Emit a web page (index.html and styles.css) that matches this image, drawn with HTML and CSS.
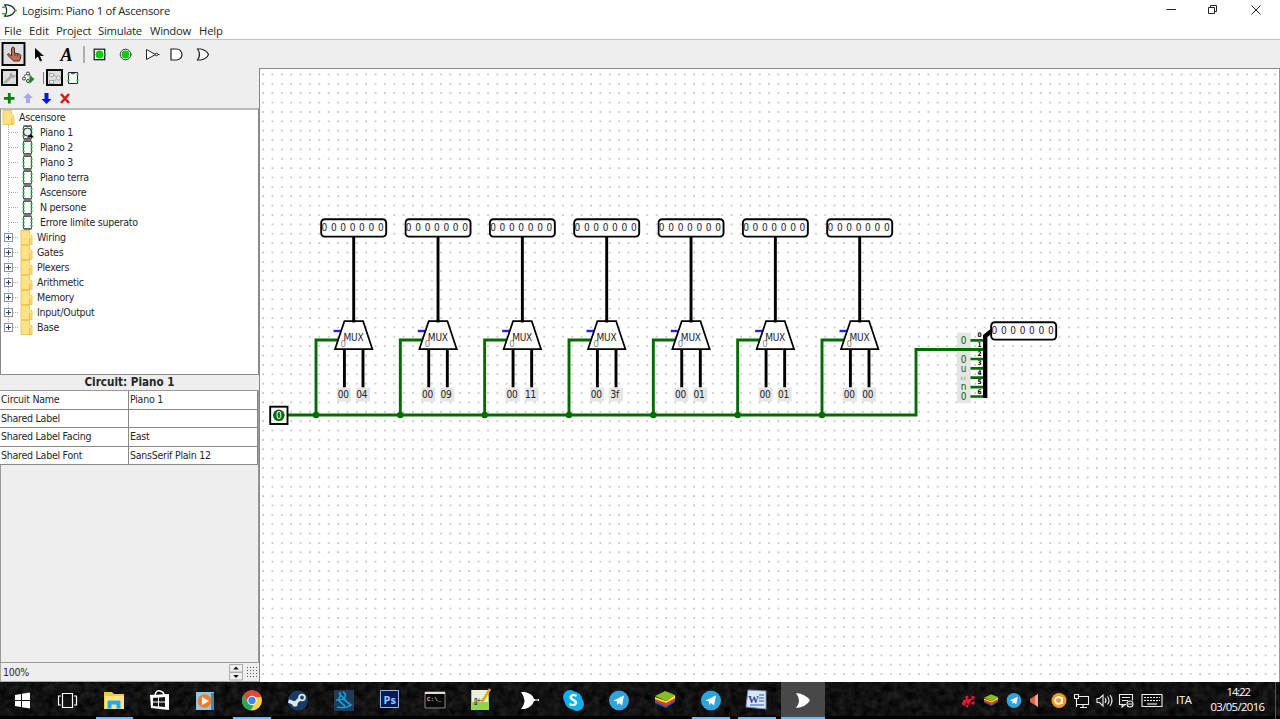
FILE: index.html
```html
<!DOCTYPE html>
<html lang="en">
<head>
<meta charset="utf-8">
<title>Logisim: Piano 1 of Ascensore</title>
<link rel="stylesheet" href="styles.css">
</head>
<body>
<svg class="defs" aria-hidden="true">
  <defs>
    <symbol id="folder" viewBox="0 0 13 15"><path d="M1 .5h8.500v4l2.500 1.500v8.500H1z" fill="#ffe287" stroke="#edc75c"/><path d="M9.800 8v6" stroke="#e4b84b"/></symbol>
    <symbol id="chip" viewBox="0 0 13 15"><path d="M2.500 1.500h8v12h-8z" fill="#fff" stroke="#444"/><path d="M2.500 .8h8M2.500 14.200h8" stroke="#777" stroke-width="1.600"/><path d="M2.500 3v10M10.500 3v10" stroke="#20b838" stroke-width="2" stroke-dasharray="2 1.500"/></symbol>
    <symbol id="plane" viewBox="0 0 20 20"><circle cx="10" cy="10" r="10" fill="#2ea3dc"/><path d="M4.500 10L15 5l-2 10-3-2.500-2 2V11z" fill="#fff"/></symbol>
    <symbol id="stack" viewBox="0 0 20 18"><path d="M0 9l11 5 9-6v3l-9 6-11-5z" fill="#2a55b8"/><path d="M0 7l11 5 9-6v3l-9 6-11-5z" fill="#e83c25"/><path d="M0 6l11 4 9-6v3l-9 5-11-4z" fill="#ffe13a"/><path d="M0 5l10-5 10 4-9 6z" fill="#83bf22"/></symbol>
    <symbol id="display" viewBox="0 0 68 20"><rect x="1.200" y="1.200" width="65" height="17.400" rx="3.500" fill="#fff" stroke="#000" stroke-width="1.900"/><text class="digits" x="1.500 10.900 20.300 29.700 39.100 48.500 57.900" y="13.300">0000000</text></symbol>
    <symbol id="mux" viewBox="0 0 60 180" overflow="visible">
      <path d="M37.700 18v86M28.400 131v38M47 131v38" stroke="#000" stroke-width="2.900"/>
      <path d="M17.500 112.500h8" stroke="#2222e8" stroke-width="2.400"/>
      <path d="M0 196.500v-75h22" fill="none" stroke="#006c00" stroke-width="2.900"/>
      <path d="M28.400 102.700h18.700l9.300 28H19z" fill="#fff" stroke="#000" stroke-width="1.700"/>
      <path d="M37.700 101v3" stroke="#000" stroke-width="2.900"/>
      <text x="24.500" y="128.500" class="select">0</text><text x="27.500" y="122.300" class="label" textLength="20">MUX</text>
      <circle cx="0" cy="196.500" r="3.200" fill="#006c00"/>
      <path d="M21 169h14v14H21zM40 169h14v14H40z" fill="#e5e5e5"/>
      <use href="#display" x="4" y="-.5" width="68" height="20"/>
    </symbol>
    <pattern id="grid" x="5.350" y="4.100" width="9.370" height="9.370" patternUnits="userSpaceOnUse"><rect x="4.200" y="4.200" width="1.100" height="1.100" fill="#666"/></pattern>
    <filter id="grain" x="0" y="0" width="100%" height="100%" color-interpolation-filters="sRGB"><feTurbulence type="fractalNoise" baseFrequency=".13" numOctaves="3" seed="4"/><feColorMatrix values=".2 0 0 0 -.03  .2 0 0 0 -.03  .18 0 0 0 -.02  0 0 0 0 .9"/></filter>
  </defs>
</svg>
<header class="titlebar">
  <svg class="app-icon" viewBox="0 0 16 16"><path d="M3 2h3q6 1 8 6q-2 5-8 6H3q4-6 0-12z" fill="#fff" stroke="#222" stroke-width="1.400"/><path d="M0 4.500h4M0 11.500h4M13 8h3" stroke="#24c224" stroke-width="1.500"/></svg>
  <span class="title">Logisim: Piano 1 of Ascensore</span>
  <svg class="controls" width="100" height="20" viewBox="0 0 100 20" fill="none" stroke="#222"><path d="M.5 9.500H10"/><path d="M42.500 7.500h6v6h-6zM44.500 7.500v-2h6v6h-2"/><path d="M85.500 5.500l9 9m0-9l-9 9"/></svg>
</header>
<nav class="menubar"><span class="m1">File</span><span class="m2">Edit</span><span class="m3">Project</span><span class="m4">Simulate</span><span class="m5">Window</span><span class="m6">Help</span></nav>
<div class="toolbar">
  <svg width="220" height="28" viewBox="0 0 220 28">
    <rect x="2.500" y="3" width="22" height="22" fill="#ddd" stroke="#000" stroke-width="1.900"/>
    <path d="M11.500 16V8q1.500-2 3 0v5l5 1q2 1 1 4l-1 3h-6l-5-5q-2-2 0-2.500z" fill="#bb705c" stroke="#50271c"/><path d="M15 13v3m2.500-2.500v3" stroke="#50271c" stroke-width=".7"/>
    <path d="M35 8v11l3-2.500 2 5 2-1-2-4.500h4z" fill="#000"/>
    <text x="60.500" y="21" class="text-tool">A</text>
    <path d="M84 6v17" stroke="#999" stroke-width="1.500"/>
    <rect x="94.200" y="9.200" width="10.500" height="10.500" fill="#fff" stroke="#222" stroke-width="1.300"/><circle cx="99.500" cy="14.500" r="3.900" fill="#00cf00"/><path d="M104 14.500h2" stroke="#0b0" stroke-width="2"/>
    <circle cx="125.500" cy="14.500" r="5.300" fill="#fff" stroke="#333"/><circle cx="125.500" cy="14.500" r="3.900" fill="#00cf00"/><path d="M130 14.500h2" stroke="#0b0" stroke-width="2"/>
    <path d="M146.500 9.500v10l9-5zM155.500 14.500h4" fill="#fff" stroke="#222"/><circle cx="156.500" cy="14.500" r="1.300" fill="#fff" stroke="#222"/>
    <path d="M171 9v11h5.500a5.500 5.500 0 0 0 0-11z" fill="#fff" stroke="#222" stroke-width="1.200"/>
    <path d="M197.500 9h3q6 1 8 5.500q-2 4.500-8 5.500h-3q4-5.500 0-11z" fill="#fff" stroke="#222" stroke-width="1.200"/>
  </svg>
</div>
<main class="workspace">
  <aside class="sidebar">
    <div class="tools">
      <svg width="100" height="40" viewBox="0 0 100 40">
        <rect x="2" y="2" width="15" height="15" fill="#ddd" stroke="#000" stroke-width="1.900"/><path d="M4.500 15l6.500-6.500" stroke="#aaa" stroke-width="2.600"/><path d="M11.500 4.500q-3 1.500-1.500 4t5.500.5V6.500l-2 .8-1.500-1z" fill="#aaa"/>
        <path d="M23.500 11l2-5h4l3 6" fill="none" stroke="#333" stroke-dasharray="2 1"/><g fill="#fff" stroke="#333"><circle cx="28" cy="5.500" r="1.500"/><circle cx="24" cy="10.500" r="1.500"/><circle cx="28" cy="13" r="1.500"/></g><path d="M29.500 7l5 4-5 5z" fill="#168b22"/>
        <path d="M43.500 4v12" stroke="#777"/><rect x="47" y="2" width="15" height="15" fill="#ddd" stroke="#000" stroke-width="1.900"/><g fill="#eee" stroke="#aaa"><path d="M49.500 5.500h4v3h-4zM49.500 12.500h4v3h-4z"/><circle cx="58.500" cy="10" r="2"/></g><path d="M54 7l2.500 2M54 13l2.500-2" stroke="#aaa"/>
        <path d="M68.500 4.500h9v11h-9z" fill="#fff" stroke="#222"/><path d="M68.500 5.500v10M77.500 5.500v10" stroke="#20b838" stroke-width="2" stroke-dasharray="2 4"/><path d="M71 5q2 2 4 0" fill="none" stroke="#333"/>
        <path d="M9.300 25v10.500M4 30.300h10.500" stroke="#008000" stroke-width="2.800"/>
        <path d="M28 25l-5 5h3v5h4v-5h3z" fill="#a7a7ee"/><path d="M46.500 36l-5-5h3v-6h4v6h3z" fill="#0018e0"/><path d="M61 26l8 9m0-9l-8 9" stroke="#dc1818" stroke-width="2.600"/>
      </svg>
    </div>
    <section class="tree">
      <div class="row root"><svg class="icon"><use href="#folder"/></svg><span>Ascensore</span></div>
      <div class="branch">
        <div class="row circuit"><svg class="icon"><use href="#chip"/><circle cx="6.500" cy="7" r="4" fill="#e8edff" stroke="#222"/><path d="M5.500 12.500h7.500l-3-3z" fill="#000"/></svg><span>Piano 1</span></div>
        <div class="row circuit"><svg class="icon"><use href="#chip"/></svg><span>Piano 2</span></div>
        <div class="row circuit"><svg class="icon"><use href="#chip"/></svg><span>Piano 3</span></div>
        <div class="row circuit"><svg class="icon"><use href="#chip"/></svg><span>Piano terra</span></div>
        <div class="row circuit"><svg class="icon"><use href="#chip"/></svg><span>Ascensore</span></div>
        <div class="row circuit"><svg class="icon"><use href="#chip"/></svg><span>N persone</span></div>
        <div class="row circuit"><svg class="icon"><use href="#chip"/></svg><span>Errore limite superato</span></div>
        <div class="row library"><i class="expander"></i><svg class="icon"><use href="#folder"/></svg><span>Wiring</span></div>
        <div class="row library"><i class="expander"></i><svg class="icon"><use href="#folder"/></svg><span>Gates</span></div>
        <div class="row library"><i class="expander"></i><svg class="icon"><use href="#folder"/></svg><span>Plexers</span></div>
        <div class="row library"><i class="expander"></i><svg class="icon"><use href="#folder"/></svg><span>Arithmetic</span></div>
        <div class="row library"><i class="expander"></i><svg class="icon"><use href="#folder"/></svg><span>Memory</span></div>
        <div class="row library"><i class="expander"></i><svg class="icon"><use href="#folder"/></svg><span>Input/Output</span></div>
        <div class="row library"><i class="expander"></i><svg class="icon"><use href="#folder"/></svg><span>Base</span></div>
      </div>
    </section>
    <h2 class="props-title">Circuit: Piano 1</h2>
    <div class="props">
      <span>Circuit Name</span><span>Piano 1</span>
      <span>Shared Label</span><span></span>
      <span>Shared Label Facing</span><span>East</span>
      <span>Shared Label Font</span><span>SansSerif Plain 12</span>
    </div>
    <div class="filler"></div>
    <footer class="zoom"><span class="zoom-value">100%</span><span class="spinner"><svg width="14" height="17" viewBox="0 0 14 17"><path d="M.5.5h13v7.500H.5zM.5 8.500h13V16H.5z" fill="#eee" stroke="#aaa"/><path d="M7 2.500l2.800 3H4.200zM7 14l2.800-3H4.200z" fill="#111"/></svg></span><span class="grid-toggle"></span></footer>
  </aside>
  <section class="canvas">
    <svg width="1020" height="613" viewBox="260 69 1020 613">
      <rect x="260" y="69" width="1018" height="612" fill="url(#grid)"/>
      <path d="M1279.500 69v613" stroke="#999"/>
      <path d="M957 332.500h14V403h-14z" fill="#e5e5e5"/>
      <path d="M286 415H916V349.500H984" fill="none" stroke="#006c00" stroke-width="2.900"/>
      <rect x="270.200" y="406.700" width="17.300" height="17.300" fill="#fff" stroke="#000" stroke-width="1.900"/><circle cx="278.800" cy="415.300" r="5.800" fill="#006c00"/><text x="275.900" y="419" class="pin">0</text>
      <use href="#mux" x="316" y="218.500" width="60" height="180"/>
      <use href="#mux" x="400.330" y="218.500" width="60" height="180"/>
      <use href="#mux" x="484.660" y="218.500" width="60" height="180"/>
      <use href="#mux" x="569" y="218.500" width="60" height="180"/>
      <use href="#mux" x="653.330" y="218.500" width="60" height="180"/>
      <use href="#mux" x="737.660" y="218.500" width="60" height="180"/>
      <use href="#mux" x="822" y="218.500" width="60" height="180"/>
      <g class="label">
        <text x="337.700" y="398">00</text><text x="356.200" y="398">04</text>
        <text x="422" y="398">00</text><text x="440.500" y="398">09</text>
        <text x="506.400" y="398">00</text><text x="524.900" y="398">11</text>
        <text x="590.700" y="398">00</text><text x="610.500" y="398">3f</text>
        <text x="675" y="398">00</text><text x="693.500" y="398">01</text>
        <text x="759.400" y="398">00</text><text x="777.900" y="398">01</text>
        <text x="843.700" y="398">00</text><text x="862.200" y="398">00</text>
      </g>
      <path d="M970.500 340.300H984M970.500 359H984M970.500 368.400H984M970.500 377.700H984M970.500 387.100H984M970.500 396.500H984" stroke="#006c00" stroke-width="2.700"/>
      <path d="M985.200 398v-62l7.500-6" fill="none" stroke="#000" stroke-width="4.300"/>
      <g class="bits"><text x="960.700" y="343.800">0</text><text x="960.700" y="362.500">0</text><text x="960.700" y="371.500">u</text><text x="961" y="380" class="clipped">ıı</text><text x="960.700" y="390">n</text><text x="960.700" y="400">0</text></g>
      <g class="indices"><text x="977.500" y="337">0</text><text x="977.500" y="346.500">1</text><text x="977.500" y="356">2</text><text x="977.500" y="365.300">3</text><text x="977.500" y="374.700">4</text><text x="977.500" y="384">5</text><text x="977.500" y="393.500">6</text></g>
      <use href="#display" x="990" y="321" width="68" height="20"/>
    </svg>
  </section>
</main>
<footer class="taskbar">
  <svg width="1280" height="37" viewBox="0 682 1280 37">
    <rect y="682" width="1280" height="37" fill="#0c0c0b"/><rect y="682" width="1280" height="34" filter="url(#grain)"/>
    <rect x="781" y="682" width="44" height="35" fill="#484848"/>
    <path d="M0 716h781v3H0zM825 716h455v3H825z" fill="#000"/><path d="M96 717h37v2H96zM233 717h38v2h-38zM692 717h38v2h-38zM738 717h38v2h-38zM781 717h44v2h-44z" fill="#76b9ed"/>
    <path d="M15 695l6-1v6h-6zM22 693.800l8-1.300v7.500h-8zM15 701h6v6l-6-1zM22 701h8v7.500l-8-1.300z" fill="#fff"/>
    <path d="M62.500 693.500h10v14h-10zM61 696h-2.500v9H61M74 696h2.500v9H74" fill="none" stroke="#fff" stroke-width="1.200"/>
    <path d="M104 692h8l2 2h10v15h-20z" fill="#f2c84b"/><path d="M105 696h19v13h-19z" fill="#ffe38a"/><path d="M107.500 708.500v-7q0-1 1-1h11q1 0 1 1v7h-4v-4h-5v4z" fill="#24a9e5"/>
    <path d="M150 695l19-1v16l-18-2z" fill="#fff"/><path d="M155 695q1-5 5-4t4 4" fill="none" stroke="#fff" stroke-width="1.500"/><path d="M153 698l5-.5v4h-5zM159 697.400l6-.5v4.600h-6zM153 702.500h5v4l-5-.5zM159 702.500h6v4.600l-6-.5z" fill="#171717"/>
    <path d="M196 692h18v18h-18z" fill="#8ec8e1"/><path d="M211 693h3v17h-3z" fill="#4387ac"/><circle cx="204.500" cy="701" r="6.800" fill="#ef7b26"/><path d="M202 697l7 4-7 4z" fill="#fff"/>
    <circle cx="252" cy="700.500" r="10" fill="#ffd13d"/><path d="M243.500 695.200A10 10 0 0 1 261.500 697H252l-4.500 5z" fill="#e14736"/><path d="M243.500 695.200l5 8.300 5 2-3 5A10 10 0 0 1 243.500 695.200z" fill="#2ba553"/><circle cx="252" cy="700.500" r="4.700" fill="#fff"/><circle cx="252" cy="700.500" r="3.700" fill="#4285e8"/>
    <circle cx="298" cy="700.500" r="10" fill="#173c66"/><path d="M288.500 701l6.500 2.500 5-5" stroke="#dce7ed" stroke-width="3.500" fill="none"/><circle cx="302" cy="697.500" r="3.800" fill="#dce7ed"/><circle cx="302" cy="697.500" r="2" fill="#345"/><circle cx="295" cy="704" r="2.600" fill="#dce7ed"/>
    <path d="M334 690h20v21h-20z" fill="#213b57"/><path d="M340 692q1 5-2 8l7 6m-2-14q5 3 0 7l8 6q-6 4-14 2m-1-7l10-1m-7-6l8 9" fill="none" stroke="#169bd1" stroke-width="1.700"/>
    <path d="M380.500 690.500h18v17h-18z" fill="#071a57" stroke="#8fb9ef"/><text x="383.500" y="704" class="ps">Ps</text>
    <path d="M425 692h20v16h-20z" fill="#080808" stroke="#888"/><path d="M425 693h20" stroke="#ddd" stroke-width="2"/><text x="427" y="701" class="cmd">C:\_</text>
    <path d="M471 690h18v20h-18z" fill="#8fd64a"/><path d="M472 690h16v12h-16z" fill="#e8f4d8"/><text x="474" y="702.500" class="note">[]++</text><path d="M490 689l-8 13" stroke="#eea31c" stroke-width="2.500"/>
    <path d="M521 692h4q8 2 9 7h5v2h-5q-2 6-9 8h-4q7-8 0-17z" fill="#fff"/><path d="M535 700h3" stroke="#111"/>
    <circle cx="570" cy="697" r="7" fill="#11b0ea"/><circle cx="577" cy="704" r="7" fill="#11b0ea"/><circle cx="573.500" cy="700.500" r="9" fill="#11b0ea"/><text x="568.800" y="706.200" class="skype">S</text>
    <use href="#plane" x="609" y="690.500" width="20" height="20"/><use href="#stack" x="655" y="691" width="20" height="18"/><use href="#plane" x="701" y="690.500" width="20" height="20"/>
    <path d="M748 690l18 1v18l-20-2z" fill="#dce6f5" stroke="#708fc4"/><path d="M759 695h5M759 698h5M759 701h5M750 705h14" stroke="#315aa3"/><text x="748" y="703" class="word">W</text>
    <path d="M796 693q10 1 14 7.500q-4 6.500-14 7.500q6-7 0-15z" fill="#fff"/>
    <g fill="#dc1832"><circle cx="964" cy="703.500" r="2"/><circle cx="967" cy="697" r="1.600"/><circle cx="968.500" cy="701.500" r="2.400"/><circle cx="973" cy="697.500" r="1.800"/><circle cx="973" cy="703" r="1.800"/><circle cx="967" cy="706" r="1.500"/><path d="M963 700l11-2v1l-11 5zM967 697l2 8h-1l-3-8z"/></g>
    <use href="#stack" x="984" y="694" width="14" height="13"/><use href="#plane" x="1006.500" y="693" width="15" height="15"/>
    <path d="M1030 699l8-5v13l-8-5z" fill="#d9684f"/><path d="M1035 696l3-2v13l-3-3z" fill="#f4a392"/>
    <circle cx="1059" cy="700.500" r="7.500" fill="#f49a24"/><circle cx="1058.500" cy="700.500" r="3.400" fill="none" stroke="#fff" stroke-width="1.800"/><path d="M1062 697v7" stroke="#fff" stroke-width="1.500"/>
    <g fill="none" stroke="#eee" stroke-width="1.100"><path d="M1078 696.500h10.500v8H1077M1083 705v2m-3 .5h7M1074.500 694.500h4v4h-4zM1076.500 699v8"/><path d="M1097 698.500h2.500l3.500-3.500v11l-3.500-3.500h-2.500zM1105 698q2 2.500 0 5M1107.500 696.500q3 4 0 8M1110 695q4 5.500 0 11"/><path d="M1126 704.500h-6.500v-10h13v6M1122 697.500h8M1122 700.500h6M1122 704.500v2.500l3-2.500"/><circle cx="1130" cy="704" r="3"/><path d="M1128 704h4M1142 694.500h20v12h-20z"/><path d="M1144 697.500h16M1144 700.500h16" stroke-dasharray="2 1"/><path d="M1147 704h10"/></g>
    <text x="1176" y="704" class="tray" textLength="16">ITA</text><text x="1226.500" y="695.500" class="tray" textLength="24.500">14:22</text><text x="1210.500" y="711" class="tray" textLength="54.500">03/05/2016</text>
    <path d="M1275.500 682v37" stroke="#555"/>
  </svg>
</footer>
</body>
</html>
```
FILE: styles.css
```css
* { box-sizing: border-box; }
body { margin: 0; width: 1280px; height: 719px; overflow: hidden; display: flex; flex-direction: column; background: #eee; color: #262626; font: 10.5px "DejaVu Sans Condensed", "DejaVu Sans", sans-serif; }
svg { display: block; }
.defs { position: absolute; width: 0; height: 0; }
.titlebar { height: 22px; background: #fff; display: flex; align-items: flex-start; font: 11.3px/22px "Open Sans", sans-serif; padding-left: 2px; flex: none; }
.app-icon { width: 15px; height: 15px; margin: 3px 5px 0 0; }
.title { letter-spacing: -.28px; }
.controls { margin-left: auto; margin-right: 14px; }
.menubar { height: 18px; background: #fff; border-bottom: 1px solid #c4c4c4; display: flex; font: 11.3px/17px "Open Sans", sans-serif; padding-left: 4px; flex: none; }
.m1 { width: 25px; }
.m2 { width: 27px; }
.m3 { width: 42px; letter-spacing: -.2px; }
.m4 { width: 52px; letter-spacing: -.25px; }
.m5 { width: 49px; letter-spacing: -.3px; }
.m6 { letter-spacing: -.2px; }
.toolbar { height: 28px; flex: none; }
.text-tool { font: italic bold 18px "Liberation Serif", serif; }
.workspace { flex: 1; display: flex; min-height: 0; }
.sidebar { width: 259px; display: flex; flex-direction: column; }
.tools { height: 40px; flex: none; }
.tree { height: 267px; flex: none; background: #fff; border: 1px solid #8b8b8b; border-top: 2px solid #bbb; }
.row { height: 15px; display: flex; align-items: center; line-height: 15px; letter-spacing: -.24px; }
.icon { width: 13px; height: 15px; flex: none; }
.root { padding-left: 1px; gap: 4px; }
.branch { margin-left: 7px; background: repeating-linear-gradient(to bottom, #aaa 0 1px, transparent 1px 2px) 0 0 / 1px 203px no-repeat; }
.circuit { padding-left: 13px; gap: 6px; background: repeating-linear-gradient(to right, #aaa 0 1px, transparent 1px 2px) 1px 7px / 10px 1px no-repeat; }
.library { gap: 3px; background: repeating-linear-gradient(to right, #aaa 0 1px, transparent 1px 2px) 1px 7px / 10px 1px no-repeat; }
.library span { margin-left: 1px; }
.expander { width: 9px; height: 9px; margin: 0 4px 0 -4px; border: 1px solid #8a93a5; background: linear-gradient(#345, #345) 1px 3px / 5px 1px no-repeat, linear-gradient(#345, #345) 3px 1px / 1px 5px no-repeat, #fff; }
.props-title { margin: 0; height: 15px; flex: none; text-align: center; font: bold 11.6px/15px "DejaVu Sans Condensed", sans-serif; }
.props { height: 75px; flex: none; display: grid; grid-template-columns: 129px 129px; grid-template-rows: repeat(4, 18.6px); border-top: 1px solid #999; border-right: 1px solid #999; background: #fff; letter-spacing: -.24px; line-height: 17px; }
.props span { border-right: 1px solid #888; border-bottom: 1px solid #888; padding-left: 1px; }
.filler { flex: 1; border: 1px solid #999; border-top: 0; }
.zoom { height: 19px; display: flex; align-items: center; border-left: 1px solid #aaa; border-bottom: 1px solid #aaa; flex: none; }
.zoom-value { flex: 1; padding-left: 2px; letter-spacing: -.3px; }
.spinner { width: 15px; }
.grid-toggle { width: 12px; height: 13px; margin: 0 1px 0 2px; background: radial-gradient(circle, #555 .6px, transparent .9px) 0 0 / 3px 3px; }
.canvas { flex: 1; background: #fff; border-left: 1px solid #888; border-top: 1px solid #888; }
.canvas svg { width: 1020px; height: 613px; }
.digits { font: 10px "DejaVu Sans Condensed", sans-serif; fill: #222; }
.select { font: 9.5px "DejaVu Sans Condensed", sans-serif; fill: #888; }
.label { font: 10px "DejaVu Sans Condensed", sans-serif; letter-spacing: -.1px; fill: #222; }
.pin { font: 10px "DejaVu Sans Condensed", sans-serif; fill: #fff; }
.bits { font: 10px "DejaVu Sans Condensed", sans-serif; fill: #006c00; }
.clipped { font-size: 6px; letter-spacing: 1.5px; }
.indices { font: bold 6.5px "DejaVu Sans Condensed", sans-serif; }
.taskbar { height: 37px; flex: none; }
.ps { font: bold 11px "Open Sans", sans-serif; fill: #9bcaff; }
.cmd { font: 6px "Liberation Mono", monospace; fill: #fff; }
.note { font: 8px "Liberation Sans", sans-serif; fill: #222; letter-spacing: -1px; }
.skype { font: bold 15.5px "Open Sans", sans-serif; fill: #fff; }
.word { font: bold 11px "Liberation Serif", serif; fill: #244f9c; }
.tray { font: 11.3px "Open Sans", sans-serif; fill: #fff; }
```
